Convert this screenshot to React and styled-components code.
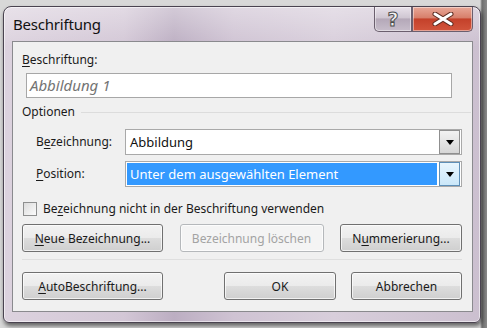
import React from 'react';
import styled, { createGlobalStyle } from 'styled-components';

const GlobalStyle = createGlobalStyle`
  html, body {
    margin: 0;
    padding: 0;
  }
  body {
    width: 487px;
    height: 328px;
    overflow: hidden;
    background: linear-gradient(to right, #d8d8d8 0, #d8d8d8 480px, #6e6e6e 482px, #8a8a8a 487px);
    font-family: "Noto Sans", "Open Sans", sans-serif;
  }
`;

const Desktop = styled.div`
  padding: 6px 0 0 3px;
`;

const Window = styled.div`
  width: 476px;
  height: 315px;
  display: flex;
  flex-direction: column;
  border: 1px solid #4a4350;
  border-radius: 8px 8px 6px 6px;
  background:
    linear-gradient(to bottom, rgba(255, 255, 255, 0.35), rgba(255, 255, 255, 0) 40px),
    linear-gradient(to right, #dcd2de 0, #d3c7d6 120px, #bcaec2 170px, #cfc3d3 230px, #d8cedb 330px, #cbbfcf 480px);
  box-shadow: 1px 3px 4px rgba(0, 0, 0, 0.55), inset 0 0 0 1px rgba(255, 255, 255, 0.55);
`;

const TitleBar = styled.div`
  height: 34px;
  display: flex;
  justify-content: space-between;
  align-items: flex-start;
  padding: 0 7px 0 9px;
`;

const Title = styled.div`
  font-size: 15px;
  line-height: 34px;
  color: #111;
  letter-spacing: -0.2px;
`;

const CaptionButtons = styled.div`
  display: flex;
`;

const CaptionButton = styled.div`
  width: ${p => p.$w}px;
  height: 24px;
  display: flex;
  align-items: center;
  justify-content: center;
  border: 1px solid #6b5f6e;
  border-top: none;
  border-radius: ${p => (p.$first ? '0 0 0 5px' : '0 0 5px 0')};
  background: ${p =>
    p.$danger
      ? 'linear-gradient(to bottom, #e8a898 0, #d77f6b 45%, #c4412a 50%, #d2553c 100%)'
      : 'linear-gradient(to bottom, #e8e2ea 0, #cfc6d2 45%, #b4a8b8 50%, #c7bdca 100%)'};
  box-shadow: inset 0 0 0 1px rgba(255, 255, 255, 0.45);
`;

const HelpGlyph = styled.span`
  font-family: "DejaVu Sans", sans-serif;
  font-weight: bold;
  font-size: 19px;
  line-height: 1;
  color: #f2f2f2;
  -webkit-text-stroke: 1px #4e4e4e;
`;

const Client = styled.div`
  flex: 1;
  margin: 0 7px 10px 8px;
  border: 1px solid #8a8a8e;
  background: #f0f0f0;
  padding: 10px 10px 0 9px;
  display: flex;
  flex-direction: column;
`;

const Label = styled.div`
  font-size: 12px;
  line-height: 16px;
  color: #1a1a1a;
  width: ${p => (p.$w ? `${p.$w}px` : 'auto')};
  flex-shrink: 0;
  white-space: nowrap;
  color: ${p => (p.$disabled ? '#a3a3a3' : '#1a1a1a')};
`;

const Key = styled.span`
  text-decoration: underline;
  text-underline-offset: 2px;
`;

const TextInput = styled.div`
  margin: 5px 0 0 4px;
  width: 421px;
  height: 23px;
  border: 1px solid #a7a7a7;
  background: #fff;
  padding-left: 3px;
  font-size: 15px;
  line-height: 23px;
  font-style: italic;
  color: #747474;
`;

const GroupHeader = styled.div`
  margin-top: 6px;
  display: flex;
  align-items: center;
`;

const GroupLine = styled.div`
  flex: 1;
  height: 1px;
  background: #dcdcdc;
  margin: 0 -9px 0 6px;
`;

const FieldRow = styled.div`
  display: flex;
  align-items: center;
  padding-left: 14px;
  margin-top: ${p => p.$top}px;
`;

const Combo = styled.div`
  width: 338px;
  height: 24px;
  display: flex;
  align-items: center;
  border: 1px solid #a9a9a9;
  background: #fff;
  padding: 0 1px 0 1px;
`;

const ComboText = styled.div`
  flex: 1;
  height: 22px;
  padding-left: 3px;
  font-size: 13px;
  line-height: 22px;
  color: ${p => (p.$selected ? '#fff' : '#111')};
  background: ${p => (p.$selected ? '#3399ff' : 'transparent')};
`;

const DropButton = styled.div`
  width: 19px;
  height: 22px;
  margin-left: 2px;
  display: flex;
  align-items: center;
  justify-content: center;
  border: 1px solid ${p => (p.$active ? '#5e8fb8' : '#8f8f8f')};
  background: ${p =>
    p.$active
      ? 'linear-gradient(to bottom, #e8f5fd, #cae7f9)'
      : 'linear-gradient(to bottom, #f2f2f2, #d6d6d6)'};
`;

const Arrow = styled.div`
  width: 0;
  height: 0;
  border-left: 4px solid transparent;
  border-right: 4px solid transparent;
  border-top: 5px solid #000;
`;

const CheckRow = styled.div`
  margin-top: 14px;
  display: flex;
  align-items: center;
  padding-left: 1px;
`;

const CheckBox = styled.div`
  width: 12px;
  height: 12px;
  border: 1px solid #8e8f8f;
  background: linear-gradient(135deg, #dcdcdc, #fbfbfb);
  margin-right: 6px;
`;

const ButtonRow = styled.div`
  margin-top: ${p => p.$top}px;
  display: flex;
  width: 440px;
  justify-content: space-between;
`;

const Group = styled.div`
  display: flex;
  gap: 15px;
`;

const Button = styled.div`
  width: ${p => p.$w}px;
  height: 26px;
  display: flex;
  align-items: center;
  justify-content: center;
  border: 1px solid ${p => (p.$disabled ? '#b5b8bb' : '#707070')};
  border-radius: 3px;
  font-size: 12px;
  color: ${p => (p.$disabled ? '#a3a3a3' : '#1a1a1a')};
  background: ${p =>
    p.$disabled
      ? '#f4f4f4'
      : 'linear-gradient(to bottom, #f2f2f2 0, #ebebeb 50%, #dddddd 50%, #cfcfcf 100%)'};
  box-shadow: inset 0 0 0 1px rgba(255, 255, 255, 0.7);
  white-space: nowrap;
`;

const Separator = styled.div`
  margin-top: 7px;
  width: 440px;
  height: 1px;
  background: #dfdfdf;
`;

export default function App() {
  return (
    <>
      <GlobalStyle />
      <Desktop>
        <Window>
          <TitleBar>
            <Title>Beschriftung</Title>
            <CaptionButtons>
              <CaptionButton $w={36} $first>
                <HelpGlyph>?</HelpGlyph>
              </CaptionButton>
              <CaptionButton $w={59} $danger>
                <svg width="22" height="14" viewBox="0 0 22 14">
                  <path d="M3 2 L19 12 M19 2 L3 12" stroke="#5b2a1f" strokeWidth="5" strokeLinecap="round" />
                  <path d="M3 2 L19 12 M19 2 L3 12" stroke="#fff" strokeWidth="3" strokeLinecap="round" />
                </svg>
              </CaptionButton>
            </CaptionButtons>
          </TitleBar>
          <Client>
            <Label><Key>B</Key>eschriftung:</Label>
            <TextInput>Abbildung 1</TextInput>
            <GroupHeader>
              <Label>Optionen</Label>
              <GroupLine />
            </GroupHeader>
            <FieldRow $top={9}>
              <Label $w={89}>B<Key>e</Key>zeichnung:</Label>
              <Combo>
                <ComboText>Abbildung</ComboText>
                <DropButton><Arrow /></DropButton>
              </Combo>
            </FieldRow>
            <FieldRow $top={6}>
              <Label $w={89}><Key>P</Key>osition:</Label>
              <Combo>
                <ComboText $selected>Unter dem ausgewählten Element</ComboText>
                <DropButton $active><Arrow /></DropButton>
              </Combo>
            </FieldRow>
            <CheckRow>
              <CheckBox />
              <Label>Be<Key>z</Key>eichnung nicht in der Beschriftung verwenden</Label>
            </CheckRow>
            <ButtonRow $top={7}>
              <Button $w={139}><span><Key>N</Key>eue Bezeichnung...</span></Button>
              <Button $w={142} $disabled>Bezeichnung löschen</Button>
              <Button $w={120}><span>N<Key>u</Key>mmerierung...</span></Button>
            </ButtonRow>
            <Separator />
            <ButtonRow $top={12}>
              <Button $w={139}><span><Key>A</Key>utoBeschriftung...</span></Button>
              <Group>
                <Button $w={110}>OK</Button>
                <Button $w={109}>Abbrechen</Button>
              </Group>
            </ButtonRow>
          </Client>
        </Window>
      </Desktop>
    </>
  );
}
